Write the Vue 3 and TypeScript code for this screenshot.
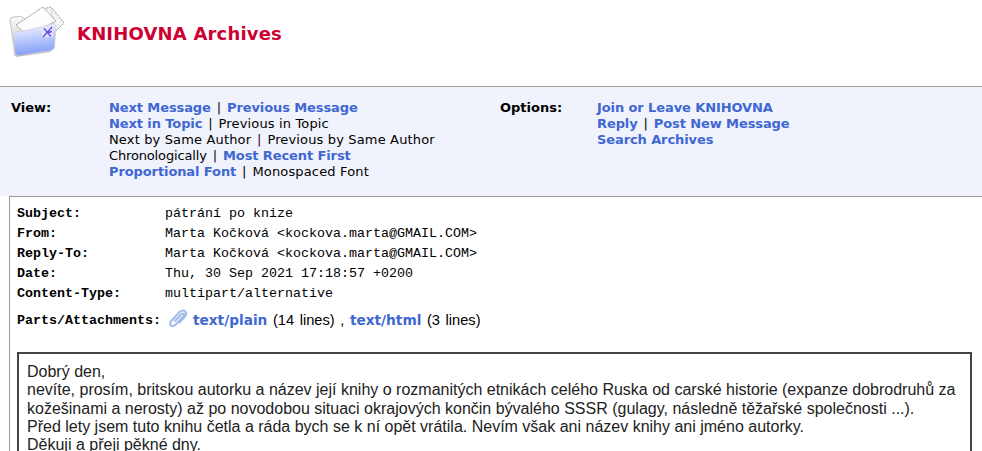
<script setup lang="ts">
interface Part {
  text: string
  bold?: boolean
  tight?: boolean
}

const viewLines: Part[][] = [
  [{ text: 'Next Message', bold: true }, { text: 'Previous Message', bold: true }],
  [{ text: 'Next in Topic', bold: true }, { text: 'Previous in Topic' }],
  [{ text: 'Next by Same Author' }, { text: 'Previous by Same Author' }],
  [{ text: 'Chronologically', tight: true }, { text: 'Most Recent First', bold: true }],
  [{ text: 'Proportional Font', bold: true }, { text: 'Monospaced Font' }]
]

const optionLines: Part[][] = [
  [{ text: 'Join or Leave KNIHOVNA', bold: true }],
  [{ text: 'Reply', bold: true }, { text: 'Post New Message', bold: true }],
  [{ text: 'Search Archives', bold: true }]
]

const headers = [
  ['Subject:', 'pátrání po knize'],
  ['From:', 'Marta Kočková <kockova.marta@GMAIL.COM>'],
  ['Reply-To:', 'Marta Kočková <kockova.marta@GMAIL.COM>'],
  ['Date:', 'Thu, 30 Sep 2021 17:18:57 +0200'],
  ['Content-Type:', 'multipart/alternative']
]
</script>

<template>
  <div class="page">
    <header class="top">
      <svg class="logo" width="66" height="60" viewBox="0 0 66 60">
        <defs>
          <linearGradient id="folderFront" x1="0.35" y1="0" x2="0.5" y2="1">
            <stop offset="0" stop-color="#f4f6ff" />
            <stop offset="1" stop-color="#7d99f8" />
          </linearGradient>
          <linearGradient id="folderBack" x1="0" y1="0" x2="0" y2="1">
            <stop offset="0" stop-color="#fbfbfb" />
            <stop offset="1" stop-color="#bdbdbd" />
          </linearGradient>
        </defs>
        <path d="M9 20 Q9 17.500 12 17.200 L20 16.200 L24 19 L36 26 L34 52 L14 56 Z" fill="url(#folderBack)" stroke="#c4c4c4" />
        <path d="M42 9 L50 7 L63 23 L55 31 Z" fill="#f4f4f4" stroke="#7f9a9a" stroke-dasharray="2 1" />
        <path d="M50 7 L52 22 L44 20" fill="none" stroke="#d8d8d8" />
        <path d="M15 25 L42 7 L55 21 L27 36 Z" fill="#fdfdfd" stroke="#a08c8c" stroke-dasharray="2 1" />
        <path d="M15 32 Q30 30 51 24 Q55 23 55 27 L53.500 47 Q53 50 49 50.800 L18 55.500 Q14 56 13.800 52.500 L12.500 35 Q12.500 32.500 15 32 Z" fill="url(#folderFront)" stroke="#cfcfcf" stroke-width="0.800" />
        <path d="M15 56.500 L50 51.500" stroke="#9a9a9a" stroke-width="1" opacity="0.600" />
        <rect x="41" y="26.500" width="11" height="10.500" fill="#e4e4fb" />
        <path d="M42 37 L51 27 M43 28.500 L50 36.500 M45 33 L51 31.500" stroke="#5a4ce2" stroke-width="1.300" fill="none" />
      </svg>
      <h1 class="title">KNIHOVNA Archives</h1>
    </header>

    <nav class="panel">
      <div class="nav-label">View:</div>
      <div class="nav-list">
        <div v-for="(line, i) in viewLines" :key="i">
          <template v-for="(part, j) in line" :key="j">
            <span v-if="j > 0" class="sep" :class="{ purple: i === 2 }"> | </span>
            <a v-if="part.bold" class="link">{{ part.text }}</a>
            <span v-else class="plain" :class="{ tight: part.tight }">{{ part.text }}</span>
          </template>
        </div>
      </div>
      <div class="nav-label">Options:</div>
      <div class="nav-list">
        <div v-for="(line, i) in optionLines" :key="i">
          <template v-for="(part, j) in line" :key="j">
            <span v-if="j > 0" class="sep"> | </span>
            <a class="link">{{ part.text }}</a>
          </template>
        </div>
      </div>
    </nav>

    <main class="card">
      <div v-for="row in headers" :key="row[0]" class="head-row">
        <b class="head-key">{{ row[0] }}</b>
        <span>{{ row[1] }}</span>
      </div>
      <div class="parts">
        <b class="parts-key">Parts/Attachments:</b>
        <svg class="clip" width="20" height="20" viewBox="0 0 20 20">
          <path d="M6.500 12.500 L13 5.500 Q14.800 3.800 15.800 4.800 Q16.800 6 15 7.800 L7.500 15.800 Q4.800 18.300 2.900 16.500 Q1 14.500 3.500 11.800 L11.500 3 Q14.500 0.300 17 2.300 Q19.500 4.600 16.800 7.800 L11 14" fill="none" stroke="#a2baec" stroke-width="2" />
        </svg>
        <span class="parts-list">
          <a class="link-sans">text/plain</a> (14 lines) , <a class="link-sans">text/html</a> (3 lines)
        </span>
      </div>
      <div class="message">
        Dobrý den,<br />
        nevíte, prosím, britskou autorku a název její knihy o rozmanitých etnikách celého Ruska od carské historie (expanze dobrodruhů za kožešinami a nerosty) až po novodobou situaci okrajových končin bývalého SSSR (gulagy, následně těžařské společnosti ...).<br />
        Před lety jsem tuto knihu četla a ráda bych se k ní opět vrátila. Nevím však ani název knihy ani jméno autorky.<br />
        Děkuji a přeji pěkné dny.
      </div>
    </main>
  </div>
</template>

<style scoped>
.page {
  height: 451px;
  overflow: hidden;
  background: #fff;
  color: #000;
  font-family: "DejaVu Sans", sans-serif;
  font-size: 13px;
  line-height: 16px;
}

.top {
  height: 86px;
  display: flex;
  align-items: flex-start;
}

.logo {
  flex: none;
  margin: 0 0 0 1px;
}

.title {
  margin: 24px 0 0 10px;
  color: #cc0033;
  font-size: 18px;
  line-height: 20px;
  font-weight: bold;
  letter-spacing: 0.18px;
}

.panel {
  height: 110px;
  box-sizing: border-box;
  padding: 13px 0 0 11px;
  background: #f0f3fc;
  border-top: 1px solid #a0a0a0;
  display: grid;
  grid-template-columns: 98px 391px 97px 1fr;
}

.nav-label {
  font-weight: bold;
}

.link {
  color: #3f67d2;
  font-weight: bold;
  letter-spacing: -0.1px;
}

.plain {
  letter-spacing: 0.15px;
}

.plain.tight {
  letter-spacing: -0.15px;
}

.sep {
  margin: 0 1.800px;
}

.sep.purple {
  color: #400040;
}

.card {
  margin-left: 9px;
  height: 260px;
  padding: 7px 0 0 7px;
  background: #fff;
  border-top: 1px solid #999;
  border-left: 1px solid #999;
  font-family: "Liberation Mono", monospace;
  font-size: 13.333px;
  line-height: 20px;
}

.head-row {
  display: flex;
  white-space: pre;
}

.head-key {
  width: 148px;
  flex: none;
}

.parts {
  display: flex;
  align-items: center;
  height: 26px;
  margin-top: 4px;
}

.parts-key {
  white-space: pre;
}

.clip {
  flex: none;
  margin: -4px 5px 0 7px;
}

.parts-list {
  margin-top: -2px;
  font-family: "Liberation Sans", sans-serif;
  font-size: 14.667px;
  word-spacing: 1.500px;
}

.link-sans {
  color: #3f67d2;
  font-family: "DejaVu Sans", sans-serif;
  font-size: 13.700px;
  font-weight: bold;
}

.message {
  width: 955px;
  box-sizing: border-box;
  margin-top: 18px;
  padding: 9px 8px;
  border: 2px solid #444;
  font-family: "Liberation Sans", sans-serif;
  font-size: 16px;
  line-height: 18.250px;
  color: #222;
}
</style>
